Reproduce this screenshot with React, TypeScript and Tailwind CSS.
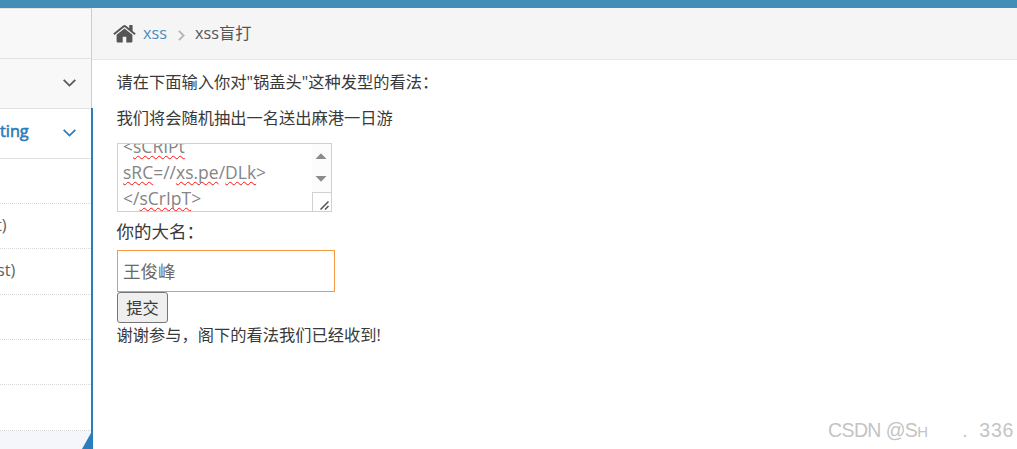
import type { ReactNode } from 'react';

// Sub menu rows, only the tail of each label sticks out of the clipped sidebar
const SUB_ITEMS = [
  { id: 'reflected', label: '', height: 'h-[45px]', offset: '' },
  { id: 'get', label: 't)', height: 'h-[45px]', offset: '-ml-[4px]' },
  { id: 'post', label: 'st)', height: 'h-[46px]', offset: '-ml-[3px]' },
  { id: 'stored', label: '', height: 'h-[45px]', offset: '' },
  { id: 'dom', label: '', height: 'h-[45px]', offset: '' },
  { id: 'dom-x', label: '', height: 'h-[46px]', offset: '' },
];

function Chevron({ className }: { className: string }) {
  return (
    <svg className={className} viewBox="0 0 13 8" fill="none" stroke="currentColor" strokeWidth="1.8">
      <path d="M.7 .9 6.5 6.6 12.3 .9" />
    </svg>
  );
}

function Misspelled({ children }: { children: ReactNode }) {
  return (
    <span className="underline decoration-[#ff1010] decoration-wavy decoration-[1.4px] underline-offset-[1.5px] [text-decoration-skip-ink:none]">
      {children}
    </span>
  );
}

function Sidebar() {
  return (
    <aside className="flex w-[93px] shrink-0 flex-col">
      <div className="mr-px h-[51px] border-y border-r border-[#e2e2e2] border-r-[#ccc] bg-[#f8f8f8]" />
      <div className="mr-px flex h-[50px] items-center justify-end border-r border-b border-[#e2e2e2] border-r-[#ccc] bg-[#f8f8f8] pr-[15px] pb-[2px] text-[#585858]">
        <Chevron className="h-2 w-[13px]" />
      </div>
      <div className="-mt-px flex flex-1 flex-col border-r-2 border-[#2b7dbc] bg-white">
        <div className="flex h-[51px] items-center justify-between border-y border-[#e2e2e2] pr-[15px] pb-[2px] text-[#2b7dbc]">
          <span className="-mt-[2px] text-[16.25px] [-webkit-text-stroke:0.6px_#2b7dbc]">ting</span>
          <Chevron className="h-2 w-[13px]" />
        </div>
        {SUB_ITEMS.map((item) => (
          <div
            key={item.id}
            className={`${item.height} flex items-center border-b border-dotted border-[#d8d8d8] pb-[2px] text-[16.25px] text-[#616161]`}
          >
            <span className={item.offset}>{item.label}</span>
          </div>
        ))}
        <div className="flex flex-1 items-end justify-end bg-[#f4f6fb]">
          <svg className="h-[16px] w-[9px]" viewBox="0 0 9 16" fill="#2b7dbc">
            <path d="M9 0V16H0Z" />
          </svg>
        </div>
      </div>
    </aside>
  );
}

function Breadcrumb() {
  return (
    <nav className="-ml-px flex h-[52px] items-center border-b border-[#e5e5e5] bg-[#f5f5f5] pl-[21px] text-[16.25px]">
      <svg className="-mt-px h-[19px] w-[23px] text-[#555]" viewBox="0 0 23 19" fill="currentColor">
        <path d="M11.5 4.4 19.4 10.8V17.2Q19.4 18.4 18.2 18.4H13.3V12.8H9.7V18.4H4.8Q3.6 18.4 3.6 17.2V10.8Z" />
        <path d="M.3 9.6 10.2 1.4Q11.5.4 12.8 1.4L16.2 4.2V1.5Q16.2 1 16.7 1H19.1Q19.6 1 19.6 1.5V7L22.7 9.6 21.6 10.9 11.5 2.9 1.4 10.9Z" />
      </svg>
      <a className="ml-[7px] text-[#4c8fbd]">xss</a>
      <svg className="mt-[3px] ml-[11px] h-[11px] w-[7px]" viewBox="0 0 7 11" fill="none" stroke="#b2b6bf" strokeWidth="1.9">
        <path d="M.9 .8 5.6 5.5 .9 10.2" />
      </svg>
      <span className="ml-[10px] text-[#555]">xss盲打</span>
    </nav>
  );
}

function MessageBox() {
  return (
    <div className="ml-[0.5px] flex h-[69px] w-[215px] border border-[#d0d0d0] bg-white">
      <div className="flex flex-1 flex-col justify-end overflow-hidden pl-[5px] text-[17.5px] leading-[26px] text-[#858585]">
        <div className="shrink-0">
          &lt;<Misspelled>sCRIPt</Misspelled>
        </div>
        <div className="shrink-0">
          <Misspelled>sRC</Misspelled>=//<Misspelled>xs.pe</Misspelled>/<Misspelled>DLk</Misspelled>&gt;
        </div>
        <div className="shrink-0">
          &lt;/<Misspelled>sCrIpT</Misspelled>&gt;
        </div>
      </div>
      <div className="flex w-[19px] flex-col bg-[#fcfcfc]">
        <svg className="h-12 w-[19px]" viewBox="0 0 19 48" fill="#8b8b8b">
          <path d="M3.5 15 9 9.2 14.5 15ZM3.5 32 9 37.8 14.5 32Z" />
        </svg>
        <svg
          className="h-[19px] w-[19px] border-t border-l border-[#d0d0d0] bg-white"
          viewBox="0 0 18 18"
          fill="none"
          stroke="#505050"
          strokeWidth="1.5"
        >
          <path d="M7.5 16.5 15.5 8.5M12 16.5 15.5 13" />
        </svg>
      </div>
    </div>
  );
}

export default function App() {
  return (
    <div className="relative flex h-[449px] w-[1017px] flex-col overflow-hidden bg-white font-['Open_Sans','Noto_Sans_CJK_SC',sans-serif] text-[#393939]">
      <header className="h-2 shrink-0 bg-[#438eb9]" />
      <div className="flex flex-1">
        <Sidebar />
        <div className="flex-1">
          <Breadcrumb />
          <main className="flex flex-col items-start pl-[23.5px] text-[16.25px] leading-6">
            <p className="mt-[10px]">请在下面输入你对"锅盖头"这种发型的看法：</p>
            <p className="mt-3 mb-[13px]">我们将会随机抽出一名送出麻港一日游</p>
            <MessageBox />
            <label className="mt-[6px] mb-[6px] text-[17.5px] leading-[26px]">你的大名：</label>
            <div className="ml-[0.5px] flex h-[42px] w-[218px] items-center border border-[#f59942] pl-[5px] text-[17.5px] text-[#696969]">
              王俊峰
            </div>
            <button className="ml-[0.5px] h-[31px] w-[51px] rounded-[3px] border border-[#767676] bg-[#efefef]">提交</button>
            <p>谢谢参与，阁下的看法我们已经收到!</p>
          </main>
        </div>
      </div>
      <div className="absolute top-[419px] left-[828px] flex h-6 w-[186px] items-center font-['Liberation_Sans',sans-serif] text-[19.5px] text-[#c4c4c4]">
        <span className="tracking-[-0.6px]">CSDN @S</span>
        <span className="mt-[3px] text-[15px]">H</span>
        <span className="ml-[34px]">.</span>
        <span className="ml-auto tracking-[0.7px]">336</span>
      </div>
    </div>
  );
}
